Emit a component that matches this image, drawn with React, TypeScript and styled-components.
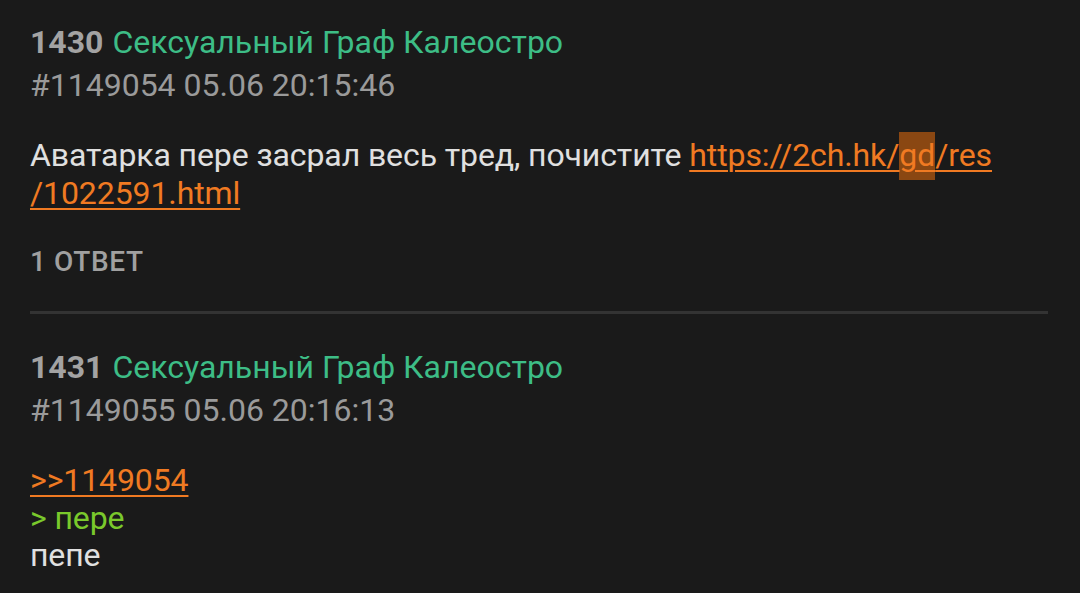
import styled, { createGlobalStyle } from 'styled-components';

const Global = createGlobalStyle`
  html, body {
    margin: 0;
    padding: 0;
    background: #1a1a1a;
  }
  body {
    font-family: Roboto, "Noto Sans", sans-serif;
  }
`;

const Thread = styled.div`
  display: flex;
  flex-direction: column;
  padding: 21px 32px 0 30px;
  box-sizing: border-box;
  width: 1080px;
  height: 593px;
  overflow: hidden;
  background: #1a1a1a;
`;

const Post = styled.div`
  display: flex;
  flex-direction: column;
`;

const Header = styled.div`
  display: flex;
  gap: 9px;
  font-size: 32px;
  line-height: 43px;
`;

const Num = styled.span`
  color: #a3a3a3;
  font-weight: 700;
`;

const Name = styled.span`
  color: #3dbd86;
`;

const Meta = styled.div`
  color: #9a9a9a;
  font-size: 32px;
  line-height: 42px;
`;

const Body = styled.div`
  margin-top: 31px;
  color: #e0e0e0;
  font-size: 32px;
  line-height: 37.5px;
  letter-spacing: -0.1px;
`;

const Link = styled.a`
  color: #f07a22;
  text-decoration: underline;
  text-decoration-thickness: 2px;
  text-underline-offset: 4px;
`;

const Mark = styled.span`
  background: #8a4712;
  padding: 4px 0 6px;
`;

const Green = styled.div`
  color: #7ac92c;
`;

const Replies = styled.div`
  margin-top: 34px;
  color: #a0a0a0;
  font-size: 28px;
  font-weight: 500;
  line-height: 32px;
  letter-spacing: 0.6px;
`;

const Divider = styled.div`
  height: 3px;
  background: #333333;
  margin: 33px 0 32px;
`;

export default function App() {
  return (
    <>
      <Global />
      <Thread>
        <Post>
          <Header>
            <Num>1430</Num>
            <Name>Сексуальный Граф Калеостро</Name>
          </Header>
          <Meta>#1149054 05.06 20:15:46</Meta>
          <Body>
            Аватарка пере засрал весь тред, почистите{' '}
            <Link>
              https://2ch.hk/<Mark>gd</Mark>/res
              <br />
              /1022591.html
            </Link>
          </Body>
          <Replies>1 ОТВЕТ</Replies>
        </Post>
        <Divider />
        <Post>
          <Header>
            <Num>1431</Num>
            <Name>Сексуальный Граф Калеостро</Name>
          </Header>
          <Meta>#1149055 05.06 20:16:13</Meta>
          <Body>
            <Link>&gt;&gt;1149054</Link>
            <Green>&gt; пере</Green>
            <div>пепе</div>
          </Body>
        </Post>
      </Thread>
    </>
  );
}
